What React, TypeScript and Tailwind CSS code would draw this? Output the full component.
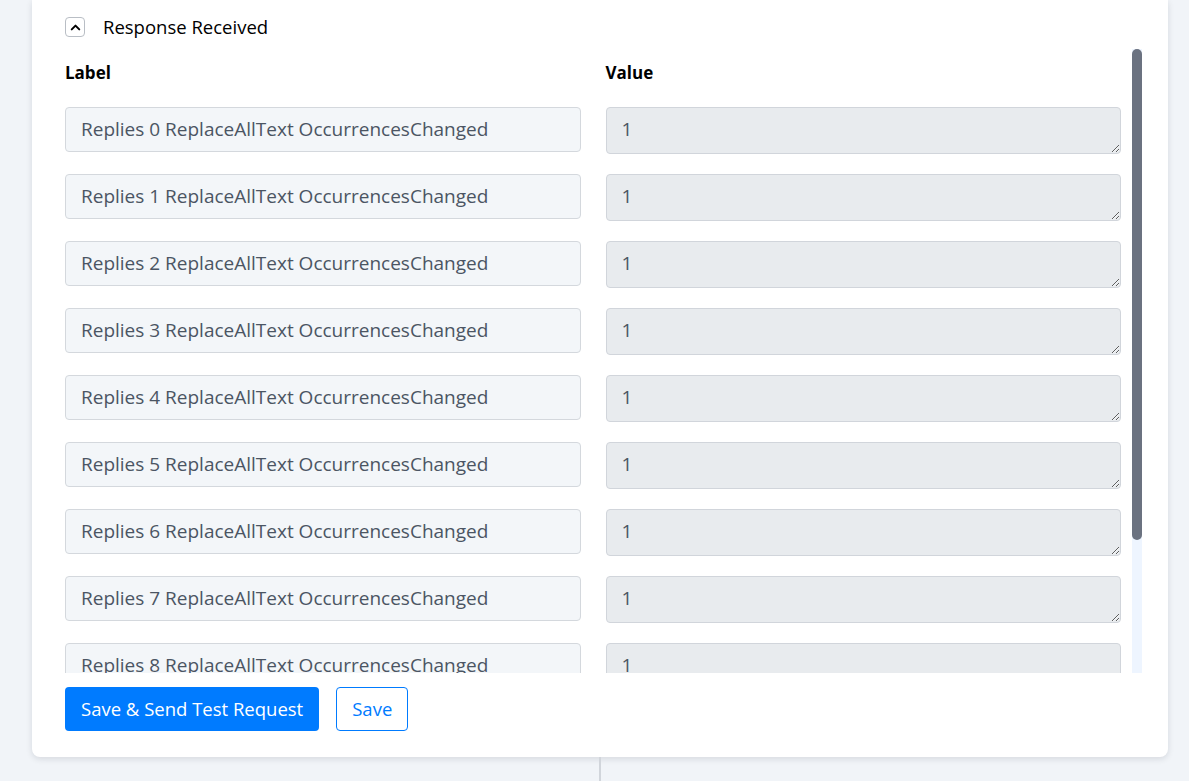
import React from 'react';
import { ChevronUp } from 'lucide-react';

const rows = Array.from({ length: 11 }, (_, i) => ({
  label: `Replies ${i} ReplaceAllText OccurrencesChanged`,
  value: '1',
}));

export default function App() {
  return (
    <div className="relative h-[781px] overflow-hidden bg-[#f1f4f8] font-['Open_Sans',sans-serif] text-[#111827]">
      <div className="ml-[32px] mr-[21px] rounded-b-lg bg-white pl-[33px] pr-[26px] pb-[26px] shadow-[0_2px_6px_rgba(15,23,42,0.12)]">
        {/* Collapsible section header */}
        <div className="flex h-[49px] items-start pt-[17px]">
          <button className="flex h-[20px] w-[20px] items-center justify-center rounded-[4px] border border-[#b9bec5] bg-white">
            <ChevronUp className="h-[15px] w-[15px] text-black" strokeWidth={3.2} />
          </button>
          <span className="ml-[18px] text-[18.5px] leading-[20px] text-black">Response Received</span>
        </div>

        {/* Label / value list with its scrollbar */}
        <div className="flex h-[624px] gap-[11px]">
          <div className="min-w-0 flex-1 overflow-hidden">
            <div className="grid grid-cols-2 gap-x-[25px] pt-[12px] pb-[22px] text-[17px] font-bold leading-[24px] text-black">
              <div>Label</div>
              <div>Value</div>
            </div>
            <div className="flex flex-col gap-[20px]">
              {rows.map((r) => (
                <div key={r.label} className="grid grid-cols-2 items-start gap-x-[25px]">
                  <input
                    readOnly
                    value={r.label}
                    className="h-[45px] w-full rounded-[4px] border border-[#d4d8dd] bg-[#f3f6f9] px-[15px] pb-[2px] text-[19px] text-[#4b5563] outline-none"
                  />
                  <textarea
                    readOnly
                    rows={1}
                    value={r.value}
                    className="h-[47px] w-full rounded-[4px] border border-[#d1d5db] bg-[#e8ebee] px-[15px] py-[9px] text-[19px] leading-[24px] text-[#4b5563] outline-none"
                  />
                </div>
              ))}
            </div>
          </div>
          <div className="w-[10px] shrink-0 bg-[#eef5ff]">
            <div className="h-[491px] rounded-full bg-[#6b7280]" />
          </div>
        </div>

        {/* Actions */}
        <div className="mt-[14px] flex gap-[17px]">
          <button className="h-[44px] rounded-[4px] bg-[#007bff] px-[16px] text-[18.5px] font-medium text-white">
            Save &amp; Send Test Request
          </button>
          <button className="h-[44px] rounded-[4px] border border-[#007bff] bg-white px-[15px] text-[18.5px] font-medium text-[#007bff]">
            Save
          </button>
        </div>
      </div>

      {/* Connector line to the next step */}
      <div className="ml-[599px] h-[40px] w-[2px] bg-[#d1d5db]" />
    </div>
  );
}
